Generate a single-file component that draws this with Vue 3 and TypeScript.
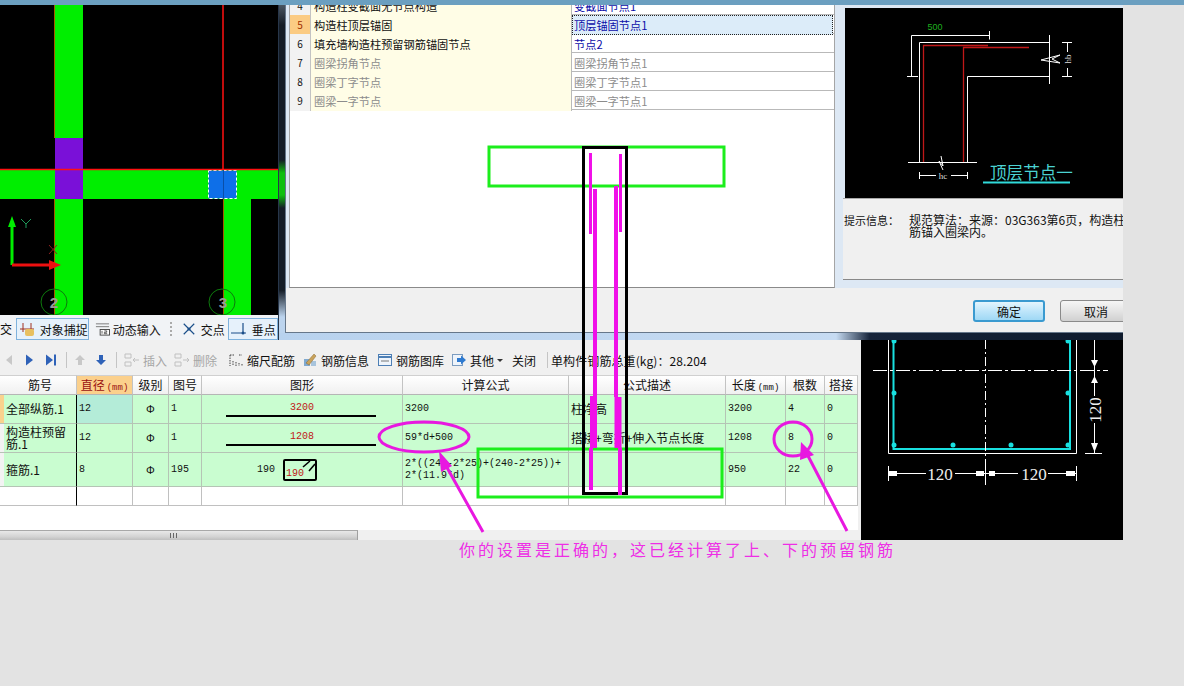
<script setup lang="ts">
interface OptionRow {
  no: number
  name: string
  value: string
  state: 'normal' | 'active' | 'muted'
}

interface BarRow {
  name: string
  dia: string
  fig: string
  shape: 'line' | 'stirrup'
  label: string
  formula: string
  desc: string
  len: string
  count: string
  lap: string
}

const options: OptionRow[] = [
  { no: 4, name: '构造柱变截面无节点构造', value: '变截面节点1', state: 'normal' },
  { no: 5, name: '构造柱顶层锚固', value: '顶层锚固节点1', state: 'active' },
  { no: 6, name: '填充墙构造柱预留钢筋锚固节点', value: '节点2', state: 'normal' },
  { no: 7, name: '圈梁拐角节点', value: '圈梁拐角节点1', state: 'muted' },
  { no: 8, name: '圈梁丁字节点', value: '圈梁丁字节点1', state: 'muted' },
  { no: 9, name: '圈梁一字节点', value: '圈梁一字节点1', state: 'muted' },
]

const bars: BarRow[] = [
  { name: '全部纵筋.1', dia: '12', fig: '1', shape: 'line', label: '3200', formula: '3200', desc: '柱净高', len: '3200', count: '4', lap: '0' },
  { name: '构造柱预留筋.1', dia: '12', fig: '1', shape: 'line', label: '1208', formula: '59*d+500', desc: '搭接+弯折+伸入节点长度', len: '1208', count: '8', lap: '0' },
  { name: '箍筋.1', dia: '8', fig: '195', shape: 'stirrup', label: '190', formula: '2*((240-2*25)+(240-2*25))+\n2*(11.9*d)', desc: '', len: '950', count: '22', lap: '0' },
]

const heads = ['筋号', '直径', '级别', '图号', '图形', '计算公式', '公式描述', '长度', '根数', '搭接']
</script>

<template>
  <div class="page">
    <div class="titlebar"></div>

    <div class="upper">
      <div class="left-col">
        <svg class="cad-left" viewBox="0 5 278 310" width="278" height="310">
          <rect x="0" y="5" width="278" height="310" fill="#000" />
          <rect x="55" y="5" width="28" height="133" fill="#00ee00" />
          <rect x="55" y="199" width="28" height="116" fill="#00ee00" />
          <rect x="223" y="199" width="28" height="116" fill="#00ee00" />
          <rect x="0" y="170" width="278" height="29" fill="#00ee00" />
          <rect x="55" y="138" width="28" height="61" fill="#7a10d8" />
          <rect x="208.5" y="170.5" width="28" height="28" fill="#0e6fe8" stroke="#fff" stroke-dasharray="3 2" />
          <path d="M0 169.5H278M223 5V170" stroke="#ff1010" stroke-width="1.5" fill="none" />
          <path d="M223.5 170V199" stroke="#0a4fa8" fill="none" />
          <path d="M54.5 5V138M54.5 199V315M223.5 199V315" stroke="#a05a00" fill="none" />
          <path d="M12 265V222" stroke="#00ee00" stroke-width="3" />
          <path d="M8 227L12 216L16 227Z" fill="#00ee00" />
          <path d="M12 265H52" stroke="#ee1010" stroke-width="3" />
          <path d="M49 260L61 265L49 270Z" fill="#ee1010" />
          <path d="M21 219L26 224L31 219M26 224V228" stroke="#1f9a5a" fill="none" />
          <path d="M49 245L57 254M57 245L49 254" stroke="#8a2020" fill="none" />
          <circle cx="54" cy="302" r="13" fill="none" stroke="#0e7a0e" />
          <circle cx="222" cy="302" r="13" fill="none" stroke="#0e7a0e" />
          <text x="54" y="308" class="axis-no">2</text>
          <text x="223" y="308" class="axis-no">3</text>
        </svg>

        <div class="statusbar">
          <span class="st-cut">交</span>
          <span class="st-btn on st-snap">
            <svg width="16" height="16" viewBox="0 0 16 16">
              <path d="M1 8H15M4 2V11M12 2V11" stroke="#a03020" fill="none" />
              <rect x="6" y="8" width="9" height="7" rx="2" fill="#e8c060" />
            </svg>
            对象捕捉
          </span>
          <span class="st-btn st-input">
            <svg width="16" height="16" viewBox="0 0 16 16">
              <path d="M1 2.5H15M1 5.5H15" stroke="#777" fill="none" />
              <rect x="5.5" y="8.5" width="10" height="6" fill="#fff" stroke="#444" />
              <path d="M7.5 10V13M10 10H12.5V11.5H10V13H13" stroke="#333" fill="none" stroke-width=".8" />
            </svg>
            动态输入
          </span>
          <span class="st-dots"></span>
          <span class="st-btn st-cross">
            <svg width="16" height="16" viewBox="0 0 16 16">
              <path d="M2 2L14 14M14 2L2 14" stroke="#1b4f8a" stroke-width="1.3" />
              <circle cx="8" cy="8" r="1.8" fill="#1b4f8a" />
            </svg>
            交点
          </span>
          <span class="st-btn on st-perp">
            <svg width="16" height="16" viewBox="0 0 16 16">
              <path d="M0 12H15M12 2V12" stroke="#1b4f8a" stroke-width="1.2" />
              <circle cx="12" cy="12" r="1.5" fill="#1b4f8a" />
            </svg>
            垂点
          </span>
        </div>
      </div>

      <div class="dialog">
        <div class="dialog-in">
          <div class="dialog-top">
            <div class="options">
              <div class="option-list">
                <div v-for="row in options" :key="row.no" class="option" :class="row.state">
                  <span class="opt-no">{{ row.no }}</span>
                  <span class="opt-name">{{ row.name }}</span>
                  <span class="opt-value">{{ row.value }}</span>
                </div>
              </div>
            </div>

            <div class="side">
              <svg class="node-pic" viewBox="845 8 278 190" width="278" height="190">
                <rect x="845" y="8" width="278" height="190" fill="#000" />
                <text x="935" y="30" class="pic-500">500</text>
                <path d="M911.5 76V35.5H989.5M989.5 31V39.5M907 76.5H918" stroke="#fff" fill="none" />
                <path d="M919.5 162V42.5H1049.5M1049.5 35V84M967.5 162V76.5H1049.5M908 162.5H977" stroke="#fff" fill="none" />
                <path d="M1041 60L1060 55L1052 59L1060 63L1041 60" stroke="#fff" fill="none" />
                <path d="M941 156L943 166L939 161L943 170" stroke="#fff" fill="none" />
                <path d="M923.5 162V45.5H988M963.5 162V47.5H1029" stroke="#c01818" stroke-width="1.3" fill="none" />
                <path d="M1062 42.5H1072M1062 76.5H1072M1067.5 43V52M1067.5 68V76" stroke="#fff" fill="none" />
                <text x="1071" y="59" class="pic-hb" transform="rotate(-90 1071 59)">hb</text>
                <path d="M919.5 172V179M967.5 172V179M920 175.5H936M951 175.5H967" stroke="#fff" fill="none" />
                <text x="943" y="179" class="pic-hc">hc</text>
                <text x="990" y="179" class="pic-title">顶层节点一</text>
                <path d="M983 182.5H1070" stroke="#30dada" stroke-width="2" />
              </svg>
              <div class="hint">
                <span class="hint-label">提示信息：</span>
                <p class="hint-text">规范算法：来源：03G363第6页，构造柱纵筋锚入圈梁内。</p>
              </div>
            </div>
          </div>

          <div class="dialog-foot">
            <button class="btn primary">确定</button>
            <button class="btn">取消</button>
          </div>
        </div>
      </div>
    </div>

    <div class="lower">
      <div class="bar-panel">
        <div class="toolbar">
          <svg width="12" height="14" viewBox="0 0 12 14" class="nav"><path d="M9 2L3 7L9 12Z" fill="#c8c8c8" /></svg>
          <svg width="12" height="14" viewBox="0 0 12 14" class="nav"><path d="M3 1.5L10 7L3 12.5Z" fill="#2f62b8" /></svg>
          <svg width="12" height="14" viewBox="0 0 12 14" class="nav"><path d="M1 1.5L8 7L1 12.5ZM9 1.5H11V12.5H9Z" fill="#2f62b8" /></svg>
          <span class="sep"></span>
          <svg width="12" height="14" viewBox="0 0 12 14" class="nav"><path d="M6 2L11 7H8V12H4V7H1Z" fill="#c8c8c8" /></svg>
          <svg width="12" height="14" viewBox="0 0 12 14" class="nav"><path d="M4 2H8V7H11L6 12L1 7H4Z" fill="#2f62b8" /></svg>
          <span class="sep"></span>
          <span class="tool off">
            <svg width="16" height="16" viewBox="0 0 16 16"><path d="M1 2H7V6H1ZM1 10H7V14H1ZM9 8H15M11 6L9 8L11 10" fill="none" stroke="#c0c0c0" /></svg>
            插入
          </span>
          <span class="tool off">
            <svg width="16" height="16" viewBox="0 0 16 16"><path d="M1 2H7V6H1ZM1 10H7V14H1ZM9 8H15M13 6L15 8L13 10" fill="none" stroke="#c0c0c0" /></svg>
            删除
          </span>
          <span class="tool">
            <svg width="16" height="16" viewBox="0 0 16 16"><path d="M2 3V14M5 9V14M8 10V14M11 11V14M14 12V14M2 3H6M11 3H14" fill="none" stroke="#444" stroke-dasharray="1.5 1" /></svg>
            缩尺配筋
          </span>
          <span class="tool">
            <svg width="16" height="16" viewBox="0 0 16 16"><rect x="2" y="7" width="6" height="7" fill="#7fa9d0" /><rect x="9" y="9" width="5" height="5" fill="#a8c4dc" /><path d="M4 11L12 2L14 4L7 13Z" fill="#c9a35c" stroke="#8a6a30" stroke-width=".5" /></svg>
            钢筋信息
          </span>
          <span class="tool">
            <svg width="16" height="16" viewBox="0 0 16 16"><rect x="1.5" y="2.5" width="13" height="11" fill="#eef4fb" stroke="#4d7fb5" /><path d="M2 5H14" stroke="#4d7fb5" stroke-width="2" /><path d="M4 9H12" stroke="#777" /></svg>
            钢筋图库
          </span>
          <span class="tool">
            <svg width="16" height="16" viewBox="0 0 16 16"><rect x="1.5" y="2.5" width="10" height="11" fill="#eef4fb" stroke="#7c9cc0" /><path d="M6 6H10V3.5L15 8L10 12.5V10H6Z" fill="#2f7ad0" /></svg>
            其他
            <i class="caret"></i>
          </span>
          <span class="tool">关闭</span>
          <span class="sep"></span>
          <span class="weight">单构件钢筋总重(kg)：28.204</span>
        </div>

        <div class="grid">
          <div class="hd rowhead"></div>
          <div v-for="(h, i) in heads" :key="h" class="hd" :class="{ sorted: i === 1 }">
            {{ h }}<small v-if="i === 1 || i === 7" class="unit">(mm)</small>
          </div>

          <template v-for="(bar, i) in bars" :key="bar.name">
            <div class="cell rowhead" :class="{ current: i === 0 }"></div>
            <div class="cell name">{{ bar.name }}</div>
            <div class="cell num dia" :class="{ picked: i === 0 }">{{ bar.dia }}</div>
            <div class="cell center">Φ</div>
            <div class="cell num">{{ bar.fig }}</div>
            <div class="cell shape">
              <template v-if="bar.shape === 'line'">
                <span class="shape-label">{{ bar.label }}</span>
                <span class="shape-line"></span>
              </template>
              <div v-else class="stirrup">
                <span class="stirrup-side">190</span>
                <span class="stirrup-box">
                  {{ bar.label }}
                  <svg width="14" height="14" viewBox="0 0 14 14"><path d="M2 7L9 1M8 11L14 4" stroke="#000" stroke-width="1.6" /></svg>
                </span>
              </div>
            </div>
            <div class="cell num formula">{{ bar.formula }}</div>
            <div class="cell">{{ bar.desc }}</div>
            <div class="cell num">{{ bar.len }}</div>
            <div class="cell num">{{ bar.count }}</div>
            <div class="cell num">{{ bar.lap }}</div>
          </template>

          <div v-for="n in 11" :key="n" class="cell blank" :class="{ rowhead: n === 1, name: n === 2 }"></div>
        </div>

        <div class="grid-rest"></div>
        <div class="hscroll">
          <div class="thumb"><span class="grip"></span></div>
        </div>
      </div>

      <svg class="cad-right" viewBox="861 340 262 200" width="262" height="200">
        <rect x="861" y="340" width="262" height="200" fill="#000" />
        <path d="M888.5 340V453.5H1076.5V340" stroke="#fff" fill="none" />
        <path d="M893.5 340V449H1070V340" stroke="#19e0e0" stroke-width="2" fill="none" />
        <g fill="#19e0e0">
          <circle cx="894" cy="341" r="2.5" />
          <circle cx="1068" cy="341" r="2.5" />
          <circle cx="894" cy="393" r="2.5" />
          <circle cx="1068" cy="393" r="2.5" />
          <circle cx="894" cy="445" r="2.5" />
          <circle cx="953" cy="445" r="2.5" />
          <circle cx="1011" cy="445" r="2.5" />
          <circle cx="1068" cy="445" r="2.5" />
        </g>
        <path d="M985.5 340V487" stroke="#fff" stroke-dasharray="9 3 2 3" />
        <path d="M873 370.5H1108" stroke="#fff" stroke-dasharray="14 3 3 3" />
        <path d="M1094.5 340V396M1094.5 423V453M1085 453.5H1102" stroke="#fff" fill="none" />
        <path d="M1091 360H1098L1094.5 367ZM1091 383H1098L1094.5 376ZM1091 443H1098L1094.5 452Z" fill="#fff" />
        <text x="1101" y="410" class="dim" transform="rotate(-90 1101 410)">120</text>
        <path d="M888.5 466V481M985.5 466V481M1076.5 466V481M889 473.5H926M955 473.5H1018M1048 473.5H1076" stroke="#fff" fill="none" />
        <path d="M889 471H897V476H889ZM976 471H984V476H976ZM989 471H995V476H989ZM1066 471H1075V476H1066Z" fill="#fff" />
        <text x="940" y="480" class="dim">120</text>
        <text x="1034" y="480" class="dim">120</text>
      </svg>
    </div>

    <svg class="marks" viewBox="0 0 1184 686" width="1184" height="686">
      <rect x="489" y="147" width="235" height="39" class="mark-green" />
      <rect x="478" y="449" width="244" height="48" class="mark-green" />
      <rect x="583.5" y="147.5" width="43" height="346" class="mark-black" />
      <path d="M590.5 153V234M620.5 154V232" stroke="#f010e8" stroke-width="3" />
      <path d="M595 189V396M616 186V397" stroke="#f010e8" stroke-width="4" />
      <path d="M593.5 396V448M618 397V448" stroke="#f010e8" stroke-width="7" />
      <path d="M591 448V490M620 448V495" stroke="#f010e8" stroke-width="4" />
      <ellipse cx="424" cy="437" rx="45" ry="15" class="mark-ring" />
      <ellipse cx="793" cy="439" rx="19" ry="17" class="mark-ring" />
      <path d="M483 532L445 464M847 531L806 452" class="mark-ring" />
      <path d="M439 451L452 466L441 472Z" fill="#e818e0" />
      <path d="M801 442L814 455L800 460Z" fill="#e818e0" />
    </svg>
    <span class="note">你的设置是正确的，这已经计算了上、下的预留钢筋</span>
  </div>
</template>

<style scoped>
.page {
  position: relative;
  width: 1184px;
  height: 686px;
  overflow: hidden;
  background: #e3e3e3;
  font-family: "Noto Sans CJK SC", "Liberation Sans", sans-serif;
  font-size: 12px;
  color: #111;
}

.titlebar {
  height: 5px;
  background: #6b9fc0;
}

.upper {
  display: flex;
  width: 1123px;
  height: 335px;
}

.left-col {
  width: 278px;
  flex-shrink: 0;
}

.cad-left,
.node-pic,
.cad-right {
  display: block;
}

.axis-no {
  font-family: "Liberation Sans", sans-serif;
  font-size: 15px;
  font-weight: 700;
  fill: #999;
  text-anchor: middle;
}

.statusbar {
  display: flex;
  align-items: flex-end;
  height: 25px;
  background: #f1f3f6;
}

.st-cut {
  width: 16px;
  height: 22px;
  line-height: 22px;
}

.st-btn {
  display: flex;
  align-items: center;
  gap: 5px;
  height: 22px;
  box-sizing: border-box;
  border: 1px solid transparent;
  padding-left: 2px;
  white-space: nowrap;
}

.st-btn.on {
  border-color: #7fb2dd;
  background: #e6f1fb;
}

.st-snap {
  width: 74px;
}

.st-input {
  width: 70px;
  margin-left: 3px;
  gap: 3px;
}

.st-dots {
  width: 2px;
  height: 14px;
  margin: 0 5px 4px 8px;
  border-left: 2px dotted #aaa;
}

.st-cross {
  width: 47px;
}

.st-perp {
  width: 51px;
  margin-left: 2px;
}

.dialog {
  flex: 1;
  display: flex;
  min-width: 0;
  overflow: hidden;
  box-sizing: border-box;
  border-left: 1px solid #27364a;
  padding: 0 0 7px 6px;
  background:
    linear-gradient(90deg, #b8d2ee 0, #c6dbf2 66%, #16243a 70%, #0e1a2c 100%) bottom / 100% 7px no-repeat,
    linear-gradient(180deg, #4a5662 0, #141c26 20px, #141c26 155px, #0fbf0f 168px, #0fbf0f 190px, #141c26 203px, #141c26 285px, #bcd4ee 312px);
}

.dialog-in {
  flex: 1;
  display: flex;
  flex-direction: column;
  min-width: 0;
  background: #f0f0f0;
  border-left: 1px solid #66778a;
  border-bottom: 1px solid #66778a;
}

.dialog-top {
  display: flex;
  height: 283px;
  padding-left: 3px;
  background: #dde8f4;
}

.options {
  width: 546px;
  flex-shrink: 0;
  box-sizing: border-box;
  overflow: hidden;
  background: #fff;
  border-left: 1px solid #a5a5a5;
  border-right: 1px solid #a5a5a5;
  border-bottom: 1px solid #8a8a8a;
}

.option-list {
  margin: -9px 0 0;
  width: 544px;
}

.option {
  display: grid;
  grid-template-columns: 21px 261px 261px;
  height: 19px;
  box-sizing: border-box;
  line-height: 20px;
  font-size: 11.2px;
  border-bottom: 1px solid #b9b9b9;
}

.opt-no {
  background: #f2f2f2;
  text-align: center;
  font-size: 10px;
  border-right: 1px solid #c3c3c3;
}

.opt-name {
  background: #fffde6;
  padding-left: 3px;
  border-right: 1px solid #b9b9b9;
}

.opt-value {
  padding-left: 2px;
  color: #0c0ca8;
}

.option.active .opt-no {
  background: #fbcb83;
  color: #a03000;
}

.option.active .opt-value {
  background: #dcecf9;
  outline: 1px dotted #222;
  outline-offset: -1px;
}

.option.muted .opt-name,
.option.muted .opt-value {
  color: #8c8c8c;
}

.side {
  flex: 1;
  min-width: 0;
  display: flex;
  flex-direction: column;
  padding: 3px 0 8px 8px;
}

.node-pic {
  margin-left: 2px;
}

.pic-500 {
  font-family: "Liberation Sans", sans-serif;
  font-size: 9px;
  fill: #1fb01f;
  text-anchor: middle;
}

.pic-hb,
.pic-hc {
  font-family: "Liberation Serif", serif;
  font-size: 9px;
  fill: #ddd;
  text-anchor: middle;
}

.pic-title {
  font-size: 16.6px;
  fill: #4bd2d2;
}

.hint {
  display: flex;
  flex: 1;
  width: 300px;
  box-sizing: border-box;
  padding: 15px 0 0 1px;
  line-height: 12px;
  background: #f0f0f0;
  border-top: 1px solid #a9a9a9;
  border-bottom: 1px solid #888;
}

.hint-label {
  width: 65px;
  flex-shrink: 0;
  font-size: 11px;
}

.hint-text {
  width: 232px;
  flex-shrink: 0;
  margin: 0;
}

.dialog-foot {
  display: flex;
  gap: 15px;
  padding: 12px 0 0 687px;
}

.btn {
  width: 72px;
  height: 22px;
  flex-shrink: 0;
  padding: 0;
  border: 1px solid #8a8a8a;
  border-radius: 3px;
  background: linear-gradient(180deg, #f6f6f6 0, #e4e4e4 50%, #d0d0d0 100%);
  font: inherit;
  color: #111;
}

.btn.primary {
  border: 2px solid #3a9ad0;
  background: linear-gradient(180deg, #e4f5fd 0, #bfe6fa 50%, #9fd8f5 100%);
}

.lower {
  display: flex;
  width: 1123px;
  height: 200px;
}

.bar-panel {
  width: 861px;
  flex-shrink: 0;
  display: flex;
  flex-direction: column;
  background: #f0f0f0;
}

.toolbar {
  display: grid;
  grid-template-columns: 18px 22px 22px 8px 20px 22px 8px 50px 54px 74px 75px 74px 61px 36px 7px auto;
  align-items: center;
  height: 22px;
  margin-top: 9px;
  margin-bottom: 4px;
  justify-items: start;
}

.nav {
  justify-self: center;
}

.sep {
  width: 1px;
  height: 16px;
  background: #c4c4c4;
  justify-self: center;
}

.tool {
  display: flex;
  align-items: center;
  gap: 3px;
  padding-left: 4px;
  white-space: nowrap;
}

.tool.off {
  color: #a6a6a6;
}

.caret {
  width: 0;
  height: 0;
  border: 3px solid transparent;
  border-top: 3px solid #333;
  margin-top: 3px;
}

.weight {
  letter-spacing: 0.1px;
}

.grid {
  display: grid;
  grid-template-columns: 4px 73px 56px 36px 33px 201px 166px 157px 60px 39px 33px;
  grid-template-rows: 20px 29px 29px 34px 19px;
  width: 858px;
  background: #fff;
}

.hd {
  background: linear-gradient(180deg, #fff 0, #f0f0f0 100%);
  border-right: 1px solid #c3c3c3;
  border-bottom: 1px solid #b5b5b5;
  border-top: 1px solid #d0d0d0;
  box-sizing: border-box;
  line-height: 18px;
  text-align: center;
  white-space: nowrap;
}

.hd.sorted {
  background: #fbd08c;
  color: #9a1010;
}

.unit {
  font-family: "Liberation Mono", monospace;
  font-size: 9px;
  margin-left: 2px;
}

.cell {
  display: flex;
  align-items: center;
  box-sizing: border-box;
  min-width: 0;
  padding-left: 2px;
  background: #c9fdd0;
  border-right: 1px solid #b5c4b5;
  border-bottom: 1px solid #b5c4b5;
  line-height: 12px;
}

.cell.rowhead {
  padding: 0;
  background: #f3f3f3;
  border-right: none;
}

.hd.rowhead {
  border-right: none;
}

.cell.rowhead.current {
  background: #f9d28e;
}

.cell.name {
  padding-left: 2px;
  border-right: 1px solid #000;
}

.cell.num {
  font-family: "Liberation Mono", monospace;
  font-size: 10px;
}

.cell.dia.picked {
  background: #b4ecd8;
}

.cell.center {
  justify-content: center;
  padding: 0;
  font-size: 11px;
  font-family: "Liberation Sans", sans-serif;
}

.cell.formula {
  line-height: 12px;
  white-space: pre-line;
}

.cell.blank {
  background: #fff;
  border-color: #c0c0c0;
}

.cell.blank.name {
  border-right-color: #000;
}

.cell.shape {
  flex-direction: column;
  justify-content: center;
  padding: 0;
}

.shape-label {
  color: #c01818;
  font-family: "Liberation Mono", monospace;
  font-size: 10px;
  line-height: 12px;
}

.shape-line {
  width: 150px;
  height: 2px;
  margin: 1px 3px 0 0;
  background: #000;
}

.stirrup {
  display: flex;
  align-items: center;
  gap: 8px;
  width: 100%;
  padding-left: 55px;
  box-sizing: border-box;
  font-family: "Liberation Mono", monospace;
  font-size: 10px;
}

.stirrup-box {
  position: relative;
  width: 34px;
  height: 22px;
  box-sizing: border-box;
  padding: 6px 0 0 1px;
  border: 2px solid #000;
  border-radius: 2px;
  line-height: 13px;
  color: #c01818;
}

.stirrup-box svg {
  position: absolute;
  top: -1px;
  right: 0;
}

.grid-rest {
  flex: 1;
  width: 858px;
  background: #fff;
}

.hscroll {
  height: 10px;
  width: 858px;
  background: #f0f0f0;
}

.thumb {
  position: relative;
  width: 358px;
  height: 100%;
  box-sizing: border-box;
  background: linear-gradient(180deg, #e8e8e8 0, #d4d4d4 60%, #bfbfbf 100%);
  border-top: 1px solid #a8a8a8;
  border-right: 1px solid #a0a0a0;
}

.grip {
  position: absolute;
  left: 170px;
  top: 2px;
  width: 7px;
  height: 5px;
  background: repeating-linear-gradient(90deg, #666 0 1px, transparent 1px 3px);
}

.dim {
  font-family: "Liberation Serif", serif;
  font-size: 17px;
  fill: #eee;
  text-anchor: middle;
}

.marks {
  position: absolute;
  left: 0;
  top: 0;
  pointer-events: none;
}

.mark-green {
  fill: none;
  stroke: #1cee1c;
  stroke-width: 3;
}

.mark-black {
  fill: none;
  stroke: #000;
  stroke-width: 3;
}

.mark-ring {
  fill: none;
  stroke: #e818e0;
  stroke-width: 3;
}

.note {
  position: absolute;
  left: 459px;
  top: 538px;
  font-size: 16px;
  line-height: 22px;
  letter-spacing: 3px;
  white-space: nowrap;
  color: #ee2ee6;
}
</style>

<style>
html,
body {
  margin: 0;
  overflow: hidden;
}
</style>
